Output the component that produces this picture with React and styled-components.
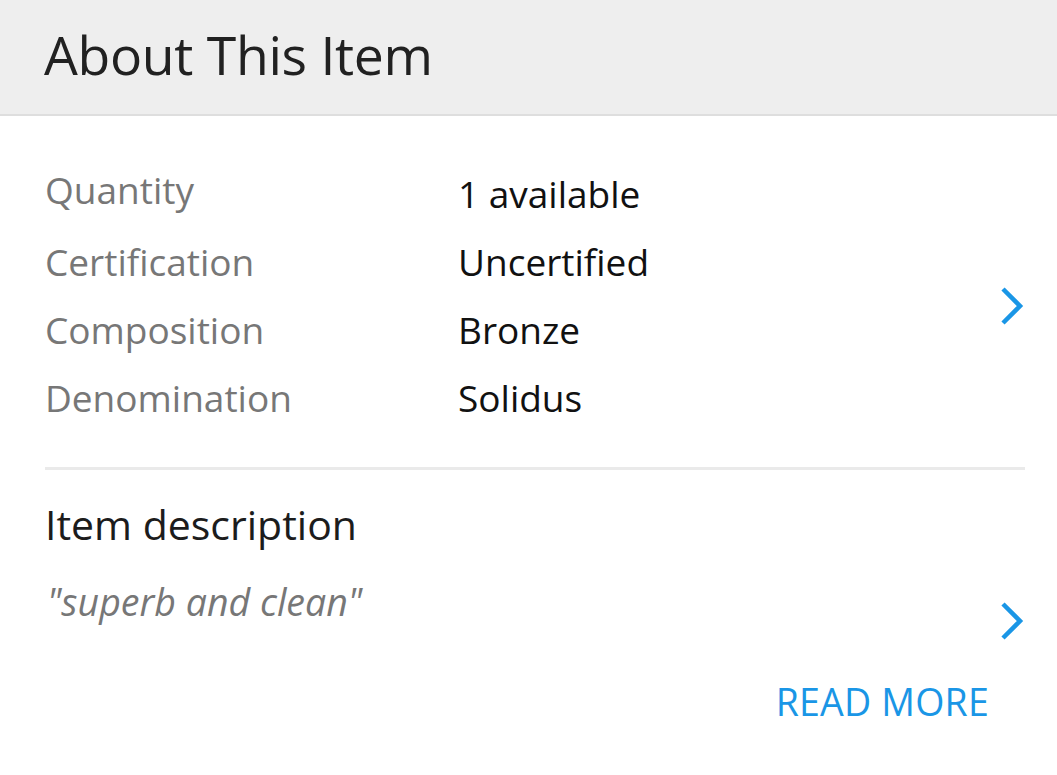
import styled, { createGlobalStyle } from "styled-components";

const GlobalStyle = createGlobalStyle`
  html, body {
    margin: 0;
    padding: 0;
    background: #ffffff;
    font-family: "Open Sans", "Noto Sans", sans-serif;
  }
`;

const Page = styled.div`
  width: 1057px;
  height: 775px;
  background: #ffffff;
  overflow: hidden;
`;

const Header = styled.div`
  height: 116px;
  box-sizing: border-box;
  padding: 0 0 6px 44px;
  background: #eeeeee;
  border-bottom: 2px solid #dedede;
  display: flex;
  align-items: center;
`;

const Title = styled.h1`
  margin: 0;
  font-size: 53.5px;
  font-weight: 400;
  color: #212121;
  letter-spacing: -0.3px;
`;

const Body = styled.div`
  padding: 0 32px 0 45px;
`;

const Specs = styled.div`
  display: flex;
  align-items: center;
  padding-top: 52px;
  padding-bottom: 41px;
  border-bottom: 3px solid #eaeaea;
`;

const SpecList = styled.div`
  flex: 1;
  display: flex;
  flex-direction: column;
  gap: 14px;
`;

const SpecRow = styled.div`
  display: grid;
  grid-template-columns: 413px 1fr;
  align-items: baseline;
  height: 54px;
`;

const Label = styled.span`
  font-size: 37px;
  color: #777777;
  position: relative;
  top: ${(p) => p.$shift || 0}px;
`;

const Value = styled.span`
  font-size: 37px;
  color: #111111;
`;

const Chevron = styled.svg`
  width: 26px;
  height: 40px;
  flex-shrink: 0;
  margin-top: ${(p) => p.$offset || 0}px;
`;

const Description = styled.div`
  padding-top: 26px;
`;

const DescTitle = styled.div`
  font-size: 41px;
  line-height: 56px;
  color: #1c1c1c;
`;

const DescRow = styled.div`
  display: flex;
  align-items: flex-start;
  justify-content: space-between;
  margin-top: 25px;
`;

const Quote = styled.div`
  font-size: 37.5px;
  line-height: 50px;
  font-style: italic;
  color: #777777;
  padding-left: 2px;
`;

const ReadMore = styled.div`
  text-align: right;
  font-size: 37.5px;
  line-height: 50px;
  color: #1a96e6;
  letter-spacing: 0.2px;
  padding-right: 36px;
  margin-top: 36px;
`;

function ChevronRight({ offset }) {
  return (
    <Chevron viewBox="0 0 26 40" $offset={offset}>
      <path d="M4 3 L21 20 L4 37" fill="none" stroke="#1a96e6" strokeWidth="4.5" />
    </Chevron>
  );
}

const specs = [
  { label: "Quantity", value: "1 available", shift: -4 },
  { label: "Certification", value: "Uncertified" },
  { label: "Composition", value: "Bronze" },
  { label: "Denomination", value: "Solidus" },
];

export default function App() {
  return (
    <Page>
      <GlobalStyle />
      <Header>
        <Title>About This Item</Title>
      </Header>
      <Body>
        <Specs>
          <SpecList>
            {specs.map((s) => (
              <SpecRow key={s.label}>
                <Label $shift={s.shift}>{s.label}</Label>
                <Value>{s.value}</Value>
              </SpecRow>
            ))}
          </SpecList>
          <ChevronRight offset={18} />
        </Specs>
        <Description>
          <DescTitle>Item description</DescTitle>
          <DescRow>
            <Quote>"superb and clean"</Quote>
            <ChevronRight offset={24} />
          </DescRow>
          <ReadMore>READ MORE</ReadMore>
        </Description>
      </Body>
    </Page>
  );
}
